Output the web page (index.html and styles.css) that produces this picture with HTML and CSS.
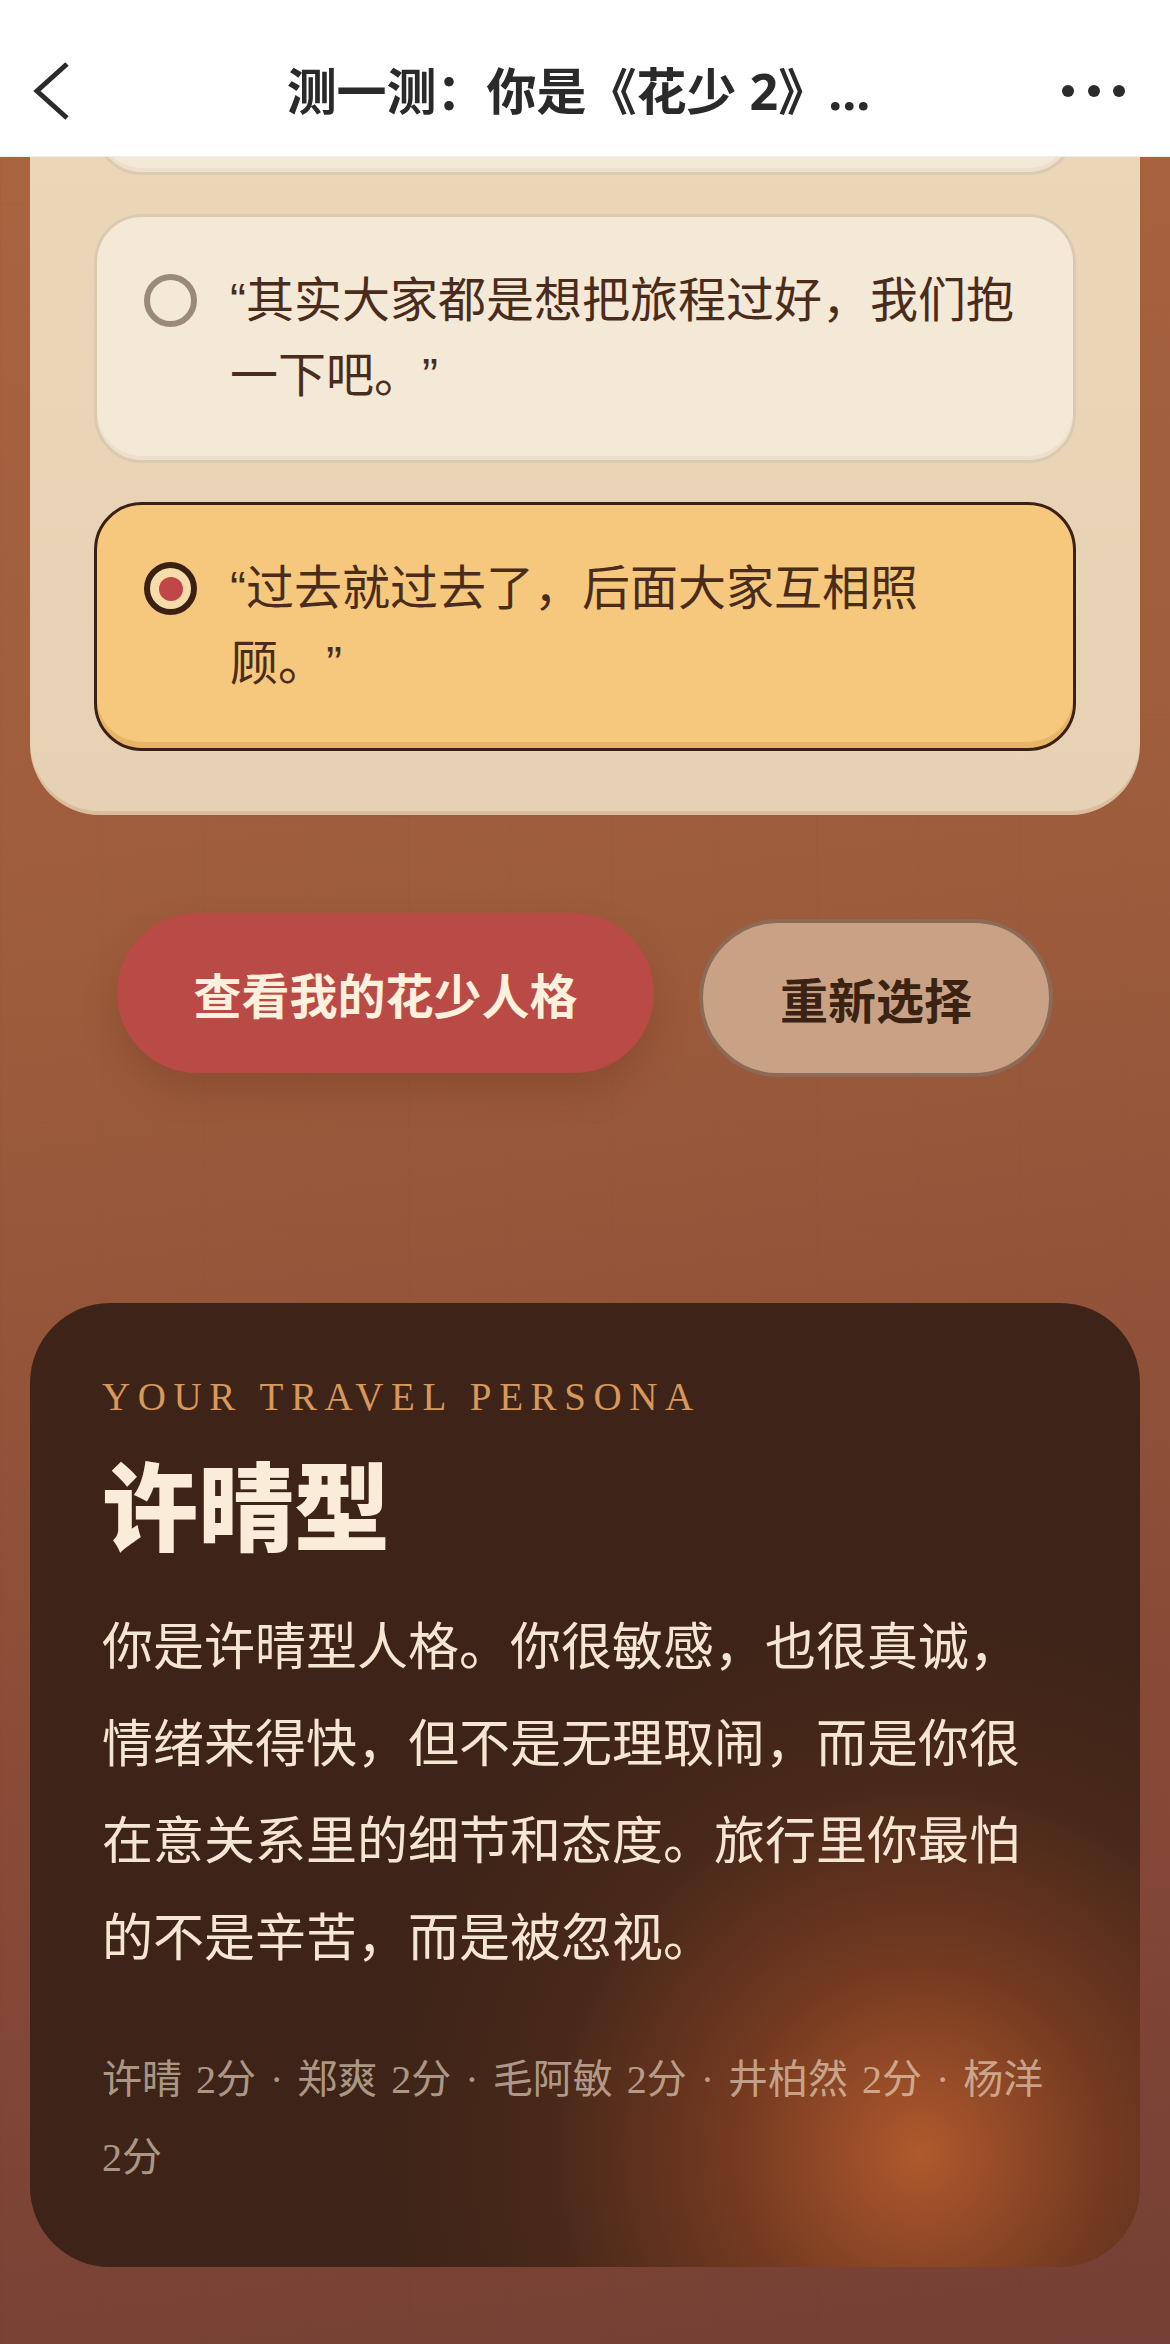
FILE: index.html
```html
<!DOCTYPE html>
<html lang="zh-CN">
<head>
    <meta charset="UTF-8">
    <meta name="viewport" content="width=device-width, initial-scale=1.0">
    <title>测一测：你是《花少 2》里的谁</title>
    <link rel="stylesheet" href="styles.css">
</head>

<body>
    <header class="topbar">
        <div class="nav">
            <button class="nav-back" aria-label="返回">
                <svg width="44" height="64" viewBox="0 0 44 64">
                    <polyline points="37,5 7,32 37,59" fill="none" stroke="#2b2b2b" stroke-width="5"/>
                </svg>
            </button>
            <h1 class="nav-title">测一测：你是《花少 2》...</h1>
            <button class="nav-more" aria-label="更多">
                <svg width="66" height="14" viewBox="0 0 66 14">
                    <circle cx="7" cy="7" r="6" fill="#2b2b2b"/>
                    <circle cx="33" cy="7" r="6" fill="#2b2b2b"/>
                    <circle cx="58" cy="7" r="6" fill="#2b2b2b"/>
                </svg>
            </button>
        </div>
    </header>

    <main class="page">
        <section class="quiz-card">
            <div class="option option-prev"></div>

            <label class="option">
                <span class="radio"></span>
                <span class="option-text">“其实大家都是想把旅程过好，我们抱一下吧。”</span>
            </label>

            <label class="option is-selected">
                <span class="radio"></span>
                <span class="option-text">“过去就过去了，后面大家互相照顾。”</span>
            </label>
        </section>

        <div class="actions">
            <button class="btn btn-primary">查看我的花少人格</button>
            <button class="btn btn-ghost">重新选择</button>
        </div>

        <section class="result-card">
            <p class="eyebrow">YOUR TRAVEL PERSONA</p>
            <h2 class="persona">许晴型</h2>
            <p class="persona-desc">你是许晴型人格。你很敏感，也很真诚，情绪来得快，但不是无理取闹，而是你很在意关系里的细节和态度。旅行里你最怕的不是辛苦，而是被忽视。</p>
            <p class="scores">许晴 2分 · 郑爽 2分 · 毛阿敏 2分 · 井柏然 2分 · 杨洋 2分</p>
        </section>
    </main>
</body>
</html>
```

FILE: styles.css
```css
/* General */
* {
    margin: 0;
    padding: 0;
    box-sizing: border-box;
}

body {
    font-family: "Liberation Sans", "Noto Sans CJK SC", sans-serif;
    min-height: 2344px;
    color: #4a2c1c;
    text-spacing-trim: space-all;
    background-color: #8f5238;
    background-image:
        linear-gradient(rgba(60, 20, 10, 0.025) 1px, transparent 1px),
        linear-gradient(90deg, rgba(60, 20, 10, 0.025) 1px, transparent 1px),
        linear-gradient(172deg, #ab6540 0%, #9d5c3c 40%, #8a4c37 70%, #743f34 100%);
    background-size: 102px 102px, 102px 102px, 100% 100%;
}

button {
    font-family: inherit;
    border: none;
    background: none;
    cursor: pointer;
}

/* Top bar */
.topbar {
    height: 157px;
    padding-top: 25px;
    background: #fff;
    border-bottom: 1px solid #eeeeee;
}

.nav {
    height: 131px;
    padding: 0 43px 0 30px;
    display: grid;
    grid-template-columns: 1fr auto 1fr;
    align-items: center;
}

.nav-back {
    justify-self: start;
    display: flex;
}

.nav-more {
    justify-self: end;
    display: flex;
}

.nav-title {
    font-family: "Noto Sans", "Noto Sans CJK SC", sans-serif;
    font-size: 50px;
    font-weight: 700;
    color: #2a2a2a;
    line-height: 1;
    white-space: nowrap;
}

/* Quiz card */
.quiz-card {
    margin: 0 30px;
    padding: 0 64px 64px;
    display: flex;
    flex-direction: column;
    gap: 39px;
    overflow: hidden;
    background: linear-gradient(180deg, #ecd6b8, #e7d1b4);
    border-radius: 0 0 70px 70px;
    box-shadow: inset 0 -4px 0 rgba(170, 120, 80, 0.22);
}

.option {
    display: flex;
    align-items: flex-start;
    gap: 33px;
    min-height: 249px;
    padding: 46px 49px 47px 47px;
    background: #f4e8d6;
    border: 3px solid #dccab0;
    border-radius: 48px;
    box-shadow: inset 0 -4px 0 rgba(170, 130, 90, 0.08);
    cursor: pointer;
}

.option-prev {
    height: 249px;
    margin-top: -231px;
}

.option-text {
    flex: 1;
    font-size: 48px;
    line-height: 75px;
    color: #4a2c1c;
}

.radio {
    flex: 0 0 53px;
    width: 53px;
    height: 53px;
    margin-top: 11px;
    border: 6px solid #9b8a7a;
    border-radius: 50%;
    display: flex;
    justify-content: center;
    align-items: center;
}

.option.is-selected {
    background: #f6c87d;
    border-color: #3a2113;
    box-shadow: inset 0 -6px 0 #e8b466;
}

.option.is-selected .radio {
    border-color: #3a2113;
    background: #f7dcab;
}

.option.is-selected .radio::after {
    content: "";
    width: 24px;
    height: 24px;
    border-radius: 50%;
    background: #c04747;
}

/* Buttons */
.actions {
    margin-top: 98px;
    display: flex;
    justify-content: center;
    align-items: flex-start;
    gap: 45px;
}

.btn {
    font-size: 48px;
    font-weight: 700;
    border-radius: 999px;
}

.btn-primary {
    width: 537px;
    height: 160px;
    background: #b94a45;
    color: #fdf0dc;
    box-shadow: 0 18px 36px rgba(90, 30, 15, 0.22);
}

.btn-ghost {
    width: 354px;
    height: 158px;
    margin-top: 6px;
    background: #c9a286;
    color: #3b2314;
    border: 4px solid #8d6a56;
}

/* Result */
.result-card {
    margin: 226px 30px 0;
    padding: 70px 72px 70px;
    border-radius: 80px;
    background-color: #3e2418;
    background-image: radial-gradient(circle 540px at 890px 850px, rgba(182, 92, 46, 0.95) 0%, rgba(150, 72, 38, 0.6) 35%, rgba(100, 52, 30, 0.25) 70%, rgba(62, 36, 24, 0) 100%);
    color: #f5e6d3;
}

.eyebrow {
    font-family: "Liberation Serif", serif;
    font-size: 39px;
    line-height: 47px;
    letter-spacing: 7.6px;
    color: #d8985b;
}

.persona {
    margin-top: 24px;
    font-family: "Noto Sans CJK SC", sans-serif;
    font-size: 96px;
    line-height: 115px;
    font-weight: 900;
    color: #faecd9;
}

.persona-desc {
    margin-top: 36px;
    font-family: "Noto Sans CJK SC", sans-serif;
    font-size: 51px;
    line-height: 97px;
}

.scores {
    margin-top: 58px;
    font-family: "Liberation Serif", "Noto Sans CJK SC", serif;
    font-size: 40px;
    line-height: 78px;
    word-spacing: 4px;
    color: rgba(245, 228, 208, 0.62);
}
```
